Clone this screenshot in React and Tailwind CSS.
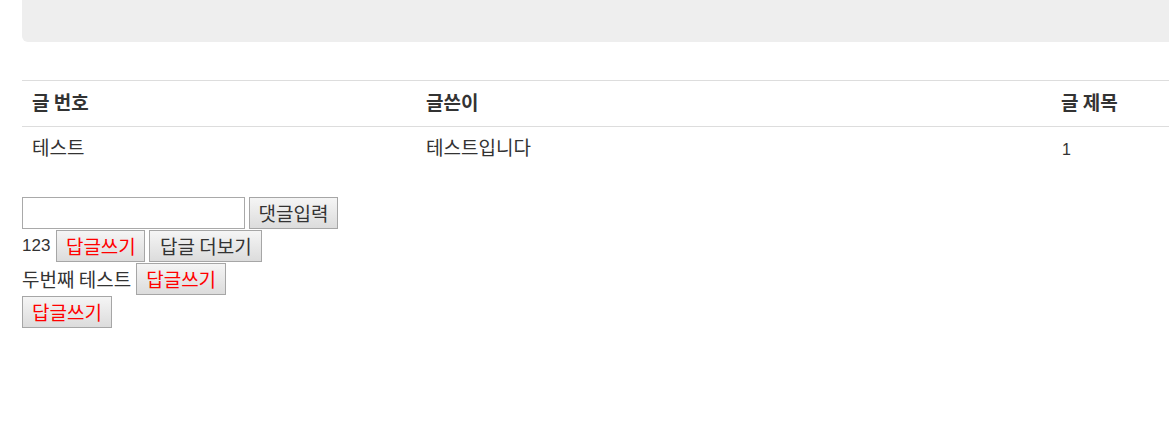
// Hangul in the reference renders noticeably larger than the Latin text, so Korean runs get their own size
const K = ({ children, className = 'text-[19px]' }) => (
  <span className={`${className} leading-none font-['Noto_Sans_CJK_KR',sans-serif]`}>{children}</span>
);

const Btn = ({ children, red, w }) => (
  <button
    type="button"
    className={`h-[32px] ${w} shrink-0 border border-[#a6a6a6] bg-gradient-to-b from-[#f5f5f5] to-[#dcdcdc] leading-none flex items-center justify-center ${
      red ? 'text-[#ff0000]' : 'text-[#333]'
    }`}
  >
    <K>{children}</K>
  </button>
);

export default function App() {
  return (
    <div className="w-[1169px] h-[442px] overflow-hidden bg-white text-[#333] font-['Liberation_Sans','Noto_Sans_CJK_KR',sans-serif]">
      <div className="pl-[22px] w-[1300px]">
        {/* jumbotron */}
        <div className="h-[42px] bg-[#eeeeee] rounded-bl-[6px]" />

        {/* table */}
        <table className="mt-[38px] w-[1278px] border-collapse text-[14px] table-fixed">
          <colgroup>
            <col className="w-[398px]" />
            <col className="w-[634px]" />
            <col />
          </colgroup>
          <thead>
            <tr className="h-[46px] border-t border-b border-[#dddddd]">
              <th className="px-[10px] text-left font-bold"><K>글 번호</K></th>
              <th className="px-[6px] text-left font-bold"><K>글쓴이</K></th>
              <th className="px-[7px] text-left font-bold"><K>글 제목</K></th>
            </tr>
          </thead>
          <tbody>
            <tr className="h-[44px]">
              <td className="px-[10px]"><K>테스트</K></td>
              <td className="px-[6px]"><K>테스트입니다</K></td>
              <td className="px-[8px] pt-[3px] text-[16px]">1</td>
            </tr>
          </tbody>
        </table>

        {/* comments */}
        <div className="mt-[26px] text-[17px] flex flex-col gap-[1px]">
          <div className="flex items-center gap-[4px] h-[32px]">
            <input type="text" className="h-[32px] w-[223px] border border-[#a9a9a9] bg-white" />
            <Btn w="w-[89px]">댓글입력</Btn>
          </div>
          <div className="flex items-center h-[32px]">
            <span>123</span>
            <span className="ml-[6px]"><Btn red w="w-[89px]">답글쓰기</Btn></span>
            <span className="ml-[4px]"><Btn w="w-[113px]">답글 더보기</Btn></span>
          </div>
          <div className="flex items-center h-[32px]">
            <K>두번째 테스트</K>
            <span className="ml-[5px]"><Btn red w="w-[90px]">답글쓰기</Btn></span>
          </div>
          <div className="flex items-center h-[32px]">
            <Btn red w="w-[90px]">답글쓰기</Btn>
          </div>
        </div>
      </div>
    </div>
  );
}
